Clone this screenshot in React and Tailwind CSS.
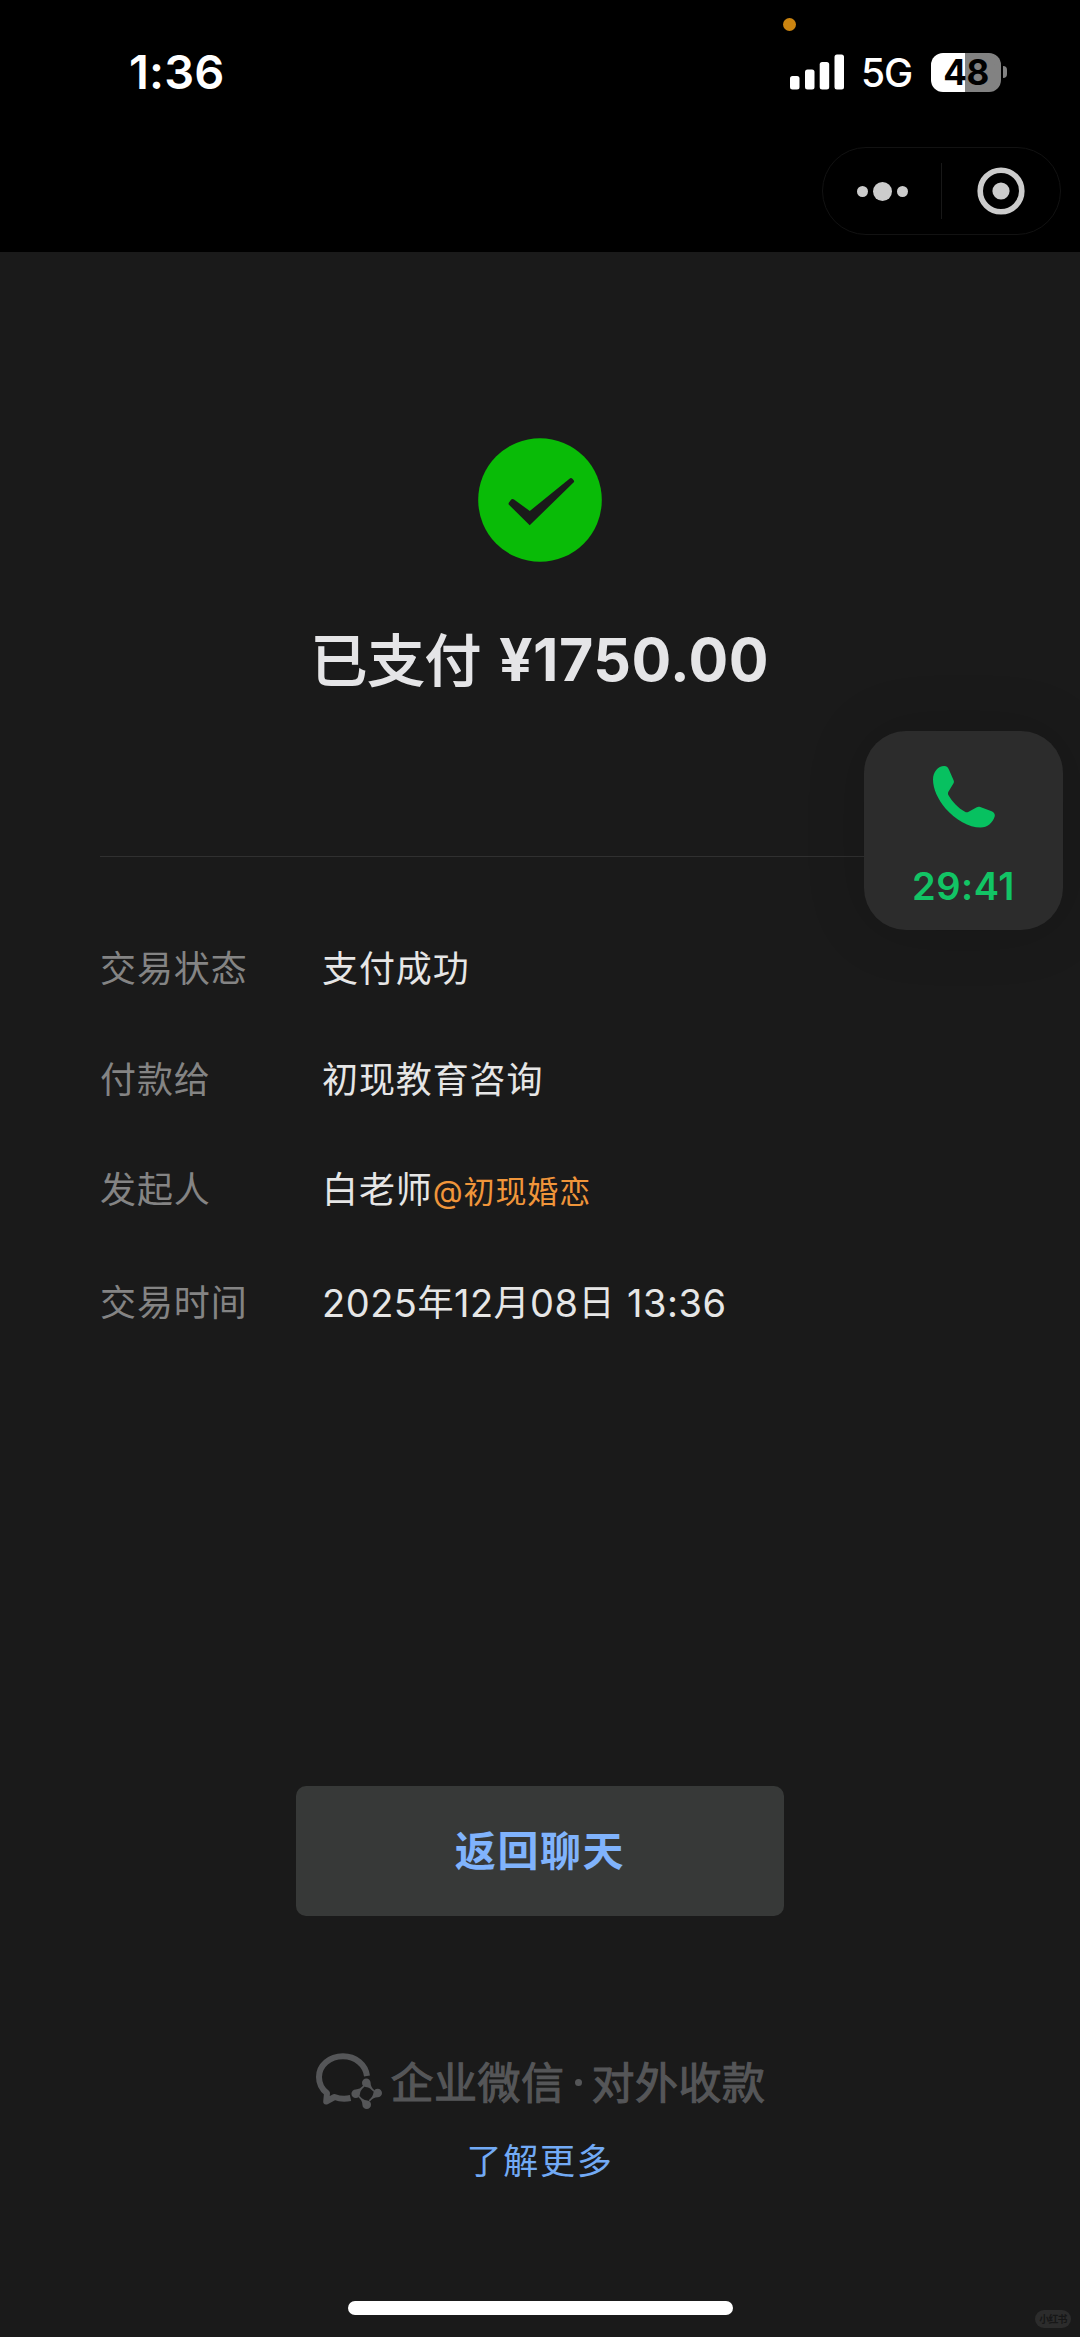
import React from "react";

const rows = [
  { label: "交易状态", value: "支付成功", height: "h-[111px]" },
  { label: "付款给", value: "初现教育咨询", height: "h-[110px]" },
  { label: "发起人", value: "白老师", company: "@初现婚恋", height: "h-[113px]" },
];

function StatusBar() {
  return (
    <div className="relative flex h-[147px] shrink-0 items-start justify-between pl-[129px] pr-[73px] pt-[44px] text-white">
      <span className="absolute left-[783px] top-[18px] h-[13px] w-[13px] rounded-full bg-[#cb8410]" />
      <span className="text-[47px] font-semibold leading-[56px] tracking-[0.2px]">1:36</span>
      <div className="flex h-[56px] items-center">
        <svg width="54" height="36" viewBox="0 0 54 36" fill="currentColor">
          <rect x="0" y="22" width="9.5" height="13.5" rx="2.5" />
          <rect x="15" y="15.5" width="9.5" height="20" rx="2.5" />
          <rect x="29.7" y="8" width="9.5" height="27.5" rx="2.5" />
          <rect x="44.5" y="0.5" width="9.5" height="35" rx="2.5" />
        </svg>
        <span className="ml-[17px] w-[53px] pt-[2px] text-[39px] font-[450] leading-[56px] tracking-[-1.2px]">5G</span>
        <div className="ml-[17px] flex items-center">
          <div className="flex h-[39px] w-[70px] items-center justify-center rounded-[12px] bg-linear-to-r from-white from-[48.5%] to-[#828282] to-[48.5%] text-[35px] font-bold leading-none tracking-[-0.5px] text-black">
            48
          </div>
          <span className="ml-[2px] h-[12px] w-[4px] rounded-r-full bg-[#828282]" />
        </div>
      </div>
    </div>
  );
}

function Capsule() {
  return (
    <div className="ml-[822px] flex h-[88px] w-[239px] items-center rounded-full border border-[#121212]">
      <div className="flex flex-1 items-center justify-center gap-[5px]">
        <span className="h-[11px] w-[11px] rounded-full bg-[#cccccc]" />
        <span className="h-[19px] w-[19px] rounded-full bg-[#cccccc]" />
        <span className="h-[11px] w-[11px] rounded-full bg-[#cccccc]" />
      </div>
      <span className="h-[56px] w-px bg-[#181818]" />
      <div className="flex flex-1 justify-center">
        <svg width="48" height="48" viewBox="0 0 48 48">
          <circle cx="24" cy="24" r="20.8" fill="none" stroke="#cccccc" strokeWidth="5.6" />
          <circle cx="24" cy="24" r="8.6" fill="#cccccc" />
        </svg>
      </div>
    </div>
  );
}

function CallWidget() {
  return (
    <div className="absolute left-[864px] top-[731px] flex h-[199px] w-[199px] flex-col items-center rounded-[42px] bg-[#2c2c2c] pt-[35px] text-[#12c465] shadow-[0_0_60px_rgba(0,0,0,0.16)]">
      <svg width="62" height="62" viewBox="0 0 62 62" fill="#07c160">
        <path d="M0 13.5C0 6 5 0 11.2 0C13.8 0 15.1 1.5 16 3.8L20.6 14.3C21.1 15.5 21 16.5 20.4 17.5L15.4 25.8C14.8 27 14.9 28.2 15.5 29.3C19.5 36.3 25.5 42.3 32 45.8C33.2 46.5 34 46.5 35.2 46L43.8 41.2C45 40.5 46 40.5 47.3 41L58 45C61 46.2 62.4 48 61.6 50.8C59.5 57 54.5 61.5 47.5 61.5C36 61.5 22.5 54 12.5 42.5C5 33.5 0 23 0 13.5Z" />
      </svg>
      <span className="mt-[34px] text-[38px] font-semibold leading-[48px] tracking-[0.5px]">29:41</span>
    </div>
  );
}

const drop = "M-4.3 0A4.3 4.3 0 1 1 4.3 0C4.3 3 5.5 5.2 8.4 7.8L7.2 9C4.7 6.2 3 4.6 -0.5 4.2A4.3 4.3 0 0 1 -4.3 0Z";

function WorkLogo() {
  return (
    <svg className="mb-[2px]" width="68" height="58" viewBox="0 0 68 58" fill="#555658">
      <path
        d="M52 24C50.5 12.5 40.5 4.3 28 4.3C14.5 4.3 4 13.5 4 25C4 31.5 7 37.3 12 41.2L11.2 49.5L19.5 45C24 46.6 30 47.2 35.5 46"
        fill="none"
        stroke="#555658"
        strokeWidth="6"
        strokeLinejoin="round"
      />
      <path d={drop} transform="translate(51.3 30.7)" />
      <path d={drop} transform="translate(62.7 41) rotate(90)" />
      <path d={drop} transform="translate(51.7 52.7) rotate(180)" />
      <path d={drop} transform="translate(40.7 41.7) rotate(270)" />
    </svg>
  );
}

export default function App() {
  return (
    <div className="relative flex h-[2337px] w-[1080px] flex-col overflow-hidden bg-[#1a1a1a] font-['Inter','Noto_Sans_CJK_SC',sans-serif]">
      <header className="h-[252px] shrink-0 bg-black">
        <StatusBar />
        <Capsule />
      </header>

      <section className="flex flex-col items-center pt-[186px]">
        <svg width="124" height="124" viewBox="0 0 124 124">
          <circle cx="62" cy="62" r="61.8" fill="#09bb07" />
          <path d="M31 64.6L33.2 61.6Q34.4 60.3 36 61.4L51.8 73L91.5 40.7Q93 39.5 94.4 40.8L95.5 42Q96.8 43.3 95.5 44.6L51.7 87.2L31.2 67Q30 65.8 31 64.6Z" fill="#1a1a1a" />
        </svg>
        <h1 className="mt-[58px] flex h-[80px] items-center text-[#e5e5e7]">
          <span className="pt-[2px] text-[56px] leading-[80px] tracking-[1px] [-webkit-text-stroke:1.8px_#e5e5e7]">已支付</span>
          <span className="ml-[17px] text-[59px] font-bold leading-[80px] tracking-[0.5px]">¥1750.00</span>
        </h1>
      </section>

      <hr className="mx-[100px] mt-[156px] border-[#303030]" />

      <dl className="mt-[57px] text-[36px] leading-[110px] tracking-[0.9px]">
        {rows.map((row) => (
          <div key={row.label} className={`flex pl-[100px] ${row.height}`}>
            <dt className="w-[222px] text-[#848484]">{row.label}</dt>
            <dd className="text-[#e6e6e6]">
              {row.value}
              {row.company && <span className="text-[31px] text-[#f0953a]">{row.company}</span>}
            </dd>
          </div>
        ))}
        <div className="flex pl-[100px]">
          <dt className="w-[222px] text-[#848484]">交易时间</dt>
          <dd className="flex tracking-[0.5px] text-[#e6e6e6]">
            <span className="text-[38px]">2025</span>年<span className="text-[38px]">12</span>月
            <span className="text-[38px]">08</span>日<span className="ml-[12px] text-[38px]">13:36</span>
          </dd>
        </div>
      </dl>

      <button className="mx-auto mt-[428px] h-[130px] w-[488px] shrink-0 rounded-[10px] bg-[#373938] pt-[2px] text-[41px] font-bold tracking-[1.6px] text-[#80b3fc]">
        返回聊天
      </button>

      <footer className="flex flex-col items-center">
        <div className="mt-[135px] flex h-[62px] items-center text-[43px] leading-[62px] tracking-[0.5px] text-[#555658] [-webkit-text-stroke:1.1px_#555658]">
          <WorkLogo />
          <span className="ml-[8px] pt-[2px]">企业微信</span>
          <span className="mx-[10px] h-[7px] w-[7px] rounded-full bg-[#555658]" />
          <span className="pt-[2px]">对外收款</span>
        </div>
        <a className="mt-[23px] text-[35px] leading-[50px] tracking-[1.8px] text-[#72aaf5]">了解更多</a>
        <span className="mt-[115px] h-[14px] w-[385px] rounded-full bg-white" />
      </footer>

      <CallWidget />
      <span className="absolute left-[1035px] top-[2310px] flex h-[18px] w-[36px] items-center justify-center rounded-full bg-[#2c2c2c] text-[10px] font-bold leading-none tracking-[-0.8px] text-[#171717]">
        小红书
      </span>
    </div>
  );
}
